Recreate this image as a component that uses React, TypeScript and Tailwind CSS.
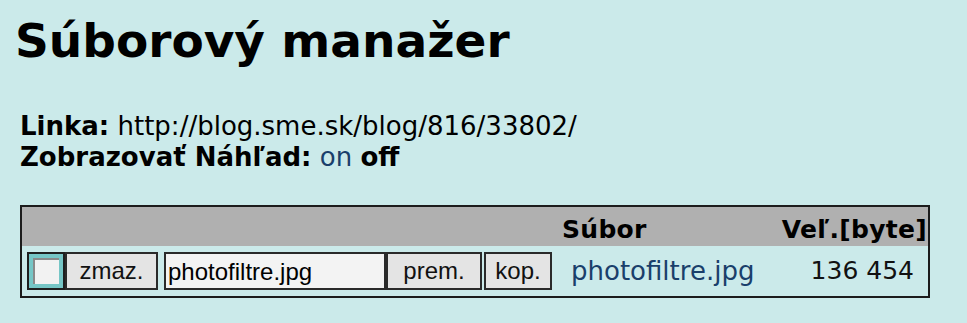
import React from 'react';

const verdana = { fontFamily: '"DejaVu Sans", Verdana, sans-serif' };
const arial = { fontFamily: '"Liberation Sans", Arial, sans-serif' };

function Btn({ label, w }: { label: string; w: string }) {
  return (
    <button
      className={`${w} h-[38px] border-2 border-[#2a2a2a] bg-[#e4e4e4] text-[24px] text-[#111] flex items-center justify-center leading-none`}
      style={arial}
    >
      {label}
    </button>
  );
}

export default function App() {
  return (
    <div className="w-[967px] h-[323px] bg-[#cbeaea] overflow-hidden text-black" style={verdana}>
      <h1 className="pl-[15px] pt-[17px] text-[47px] font-bold leading-none">Súborový manažer</h1>

      <div className="pl-[20px] pt-[47px] text-[26px] leading-[31px]">
        <div>
          <b>Linka:</b> http://blog.sme.sk/blog/816/33802/
        </div>
        <div>
          <b>Zobrazovať Náhľad:</b> <span className="text-[#1a3f6b]">on</span> <b>off</b>
        </div>
      </div>

      <div className="ml-[20px] mt-[32px] w-[910px] border-2 border-[#1c1c1c]">
        <div className="flex h-[39px] items-end bg-[#b0b0b0] pb-[4px] text-[25px] font-bold leading-none tracking-[0.3px]">
          <div className="w-[540px]" />
          <div className="w-[213px]">Súbor</div>
          <div className="flex-1 text-right pr-[1px]">Veľ.[byte]</div>
        </div>
        <div className="flex h-[50px] items-center text-[26px]">
          <div className="flex w-[549px] items-center pl-[5px]">
            <div className="w-[38px] h-[38px] border-2 border-[#1f1f1f] bg-[#76c6c6] p-[4px]">
              <div className="w-full h-full border-t-2 border-l-2 border-[#8a8a8a] bg-[#f2f2f2]" />
            </div>
            <Btn label="zmaz." w="w-[93px]" />
            <div className="w-[6px]" />
            <div
              className="w-[222px] h-[38px] border-2 border-[#2a2a2a] bg-[#f3f3f3] text-[24px] flex items-center pl-[2px] pt-[2px] leading-none"
              style={arial}
            >
              photofiltre.jpg
            </div>
            <Btn label="prem." w="w-[96px]" />
            <div className="w-[2px]" />
            <Btn label="kop." w="w-[68px]" />
          </div>
          <div className="w-[220px] pl-0 text-[#1a3f6b]">photofiltre.jpg</div>
          <div className="flex-1 text-right pr-[14px] text-[#111] text-[25px]">136 454</div>
        </div>
      </div>
    </div>
  );
}
